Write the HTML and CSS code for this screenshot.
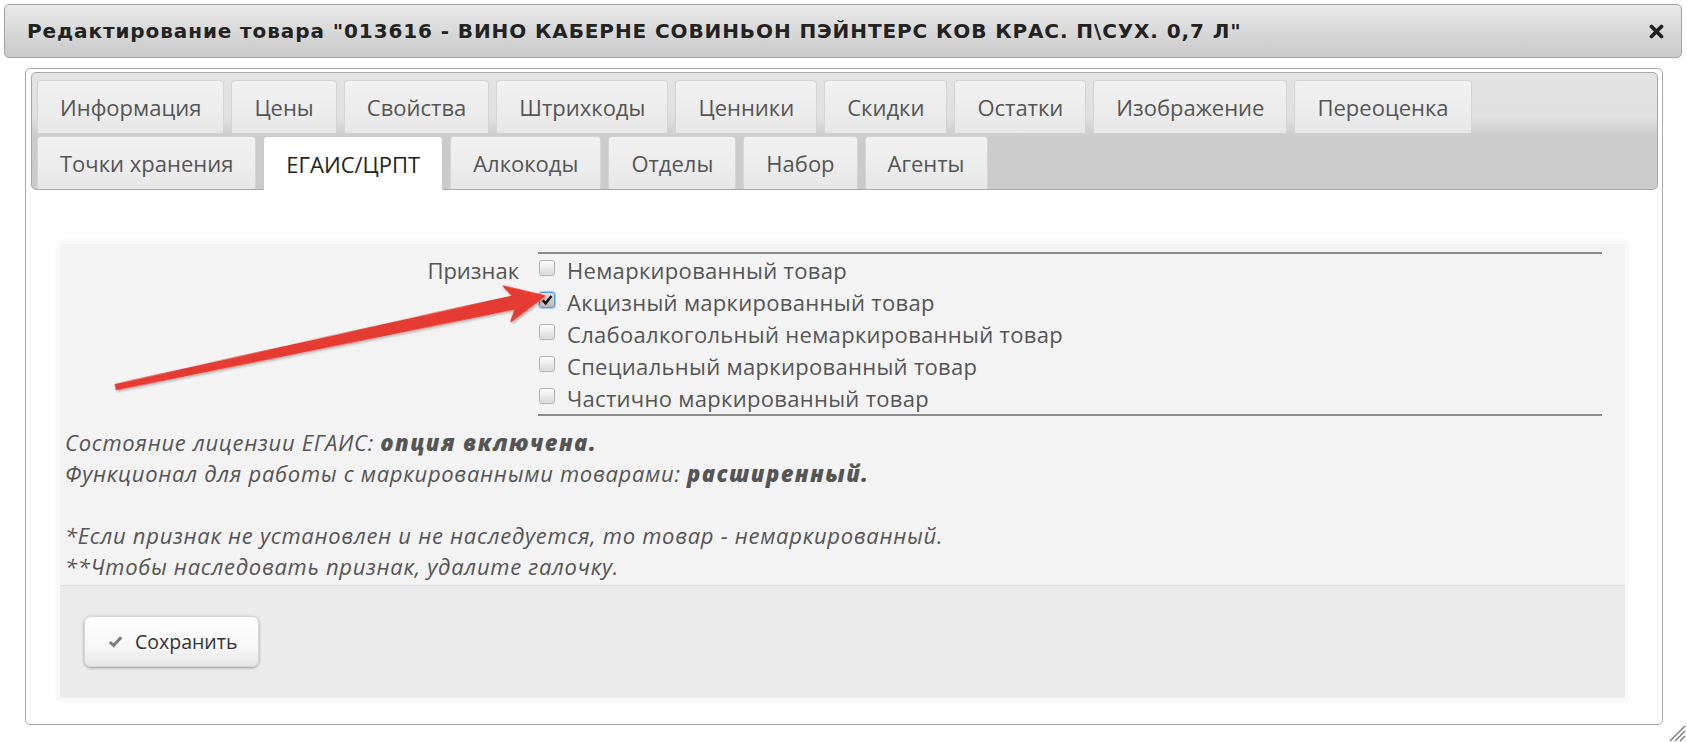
FILE: index.html
```html
<!DOCTYPE html>
<html lang="ru">
<head>
<meta charset="utf-8">
<title>Редактирование товара</title>
<link rel="stylesheet" href="styles.css">
</head>
<body>
<div class="dialog">
  <div class="titlebar">
    <span class="title">Редактирование товара "013616 - ВИНО КАБЕРНЕ СОВИНЬОН ПЭЙНТЕРС КОВ КРАС. П\СУХ. 0,7 Л"</span>
    <svg class="close" width="15" height="15" viewBox="0 0 15 15"><path d="M2.5 2.5 L12.5 12.5 M12.5 2.5 L2.5 12.5" stroke="#222" stroke-width="3.8" stroke-linecap="round"/></svg>
  </div>
  <div class="content">
    <div class="tabs">
      <div class="tab-row">
        <div class="tab">Информация</div>
        <div class="tab">Цены</div>
        <div class="tab">Свойства</div>
        <div class="tab">Штрихкоды</div>
        <div class="tab">Ценники</div>
        <div class="tab">Скидки</div>
        <div class="tab">Остатки</div>
        <div class="tab">Изображение</div>
        <div class="tab">Переоценка</div>
      </div>
      <div class="tab-row">
        <div class="tab">Точки хранения</div>
        <div class="tab active">ЕГАИС/ЦРПТ</div>
        <div class="tab">Алкокоды</div>
        <div class="tab">Отделы</div>
        <div class="tab">Набор</div>
        <div class="tab">Агенты</div>
      </div>
    </div>
    <div class="panel-wrap">
      <div class="panel">
        <div class="panel-body">
          <div class="form-row">
            <div class="form-label">Признак</div>
            <div class="checklist">
              <div class="check-row"><span class="cb"></span><span>Немаркированный товар</span></div>
              <div class="check-row"><span class="cb checked"><svg width="12" height="12" viewBox="0 0 12 12"><path d="M1.8 6.3 L4.7 9.3 L10.4 2" fill="none" stroke="#111" stroke-width="2.5"/></svg></span><span>Акцизный маркированный товар</span></div>
              <div class="check-row"><span class="cb"></span><span>Слабоалкогольный немаркированный товар</span></div>
              <div class="check-row"><span class="cb"></span><span>Специальный маркированный товар</span></div>
              <div class="check-row"><span class="cb"></span><span>Частично маркированный товар</span></div>
            </div>
          </div>
          <div class="notes">
            <div>Состояние лицензии ЕГАИС: <b>опция включена.</b></div>
            <div>Функционал для работы с маркированными товарами: <b>расширенный.</b></div>
            <div class="blank">&nbsp;</div>
            <div>*Если признак не установлен и не наследуется, то товар - немаркированный.</div>
            <div>**Чтобы наследовать признак, удалите галочку.</div>
          </div>
        </div>
        <div class="panel-footer">
          <button class="btn" type="button"><svg width="15" height="13" viewBox="0 0 15 13"><path d="M1.8 7 L5.6 10.4 L13.2 2.2" fill="none" stroke="#7a7a7a" stroke-width="3"/></svg><span>Сохранить</span></button>
        </div>
      </div>
    </div>
  </div>
</div>
<svg class="arrow" width="620" height="420" viewBox="0 0 620 420">
  <defs>
    <filter id="sh" x="-10%" y="-50%" width="120%" height="200%">
      <feDropShadow dx="1" dy="2" stdDeviation="1" flood-color="#000" flood-opacity="0.25"/>
    </filter>
  </defs>
  <g transform="translate(116 387) rotate(-12)" filter="url(#sh)">
    <polygon points="0,-2.5 407,-6.5 400,-18 438,0 400,18 407,6.5 0,2.5" fill="#e53b30" stroke="#e53b30" stroke-width="1.5" stroke-linejoin="round"/>
  </g>
</svg>
<svg class="grip" width="20" height="20" viewBox="0 0 20 20"><path d="M4 19 L19 4 M9 19 L19 9 M14 19 L19 14" stroke="#777" stroke-width="1.4"/></svg>
</body>
</html>
```
FILE: styles.css
```css
html, body {
  margin: 0;
  padding: 0;
  background: #fff;
}
body {
  font-family: "Open Sans", "Liberation Sans", sans-serif;
  position: relative;
  width: 1687px;
  height: 742px;
  overflow: hidden;
}
.dialog {
  margin: 4px 5px 0 4px;
}
.titlebar {
  height: 54px;
  box-sizing: border-box;
  border: 1px solid #a3a3a3;
  border-radius: 5px;
  background: linear-gradient(#e9e9e9, #c9c9c9);
  display: flex;
  align-items: center;
  justify-content: space-between;
  padding: 0 17px 0 22px;
}
.title {
  font-family: "DejaVu Sans", Verdana, sans-serif;
  font-weight: bold;
  font-size: 20px;
  letter-spacing: 0.9px;
  color: #222;
  white-space: nowrap;
}
.close {
  display: block;
}
.content {
  margin: 10px 19px 0 21px;
  height: 657px;
  box-sizing: border-box;
  border: 1px solid #a8a8a8;
  border-radius: 5px;
  padding: 3px 4px 0 5px;
}
.tabs {
  border: 1px solid #a9a9a9;
  border-radius: 5px;
  background: linear-gradient(#e3e3e3 0%, #e0e0e0 38%, #cbcbcb 55%, #cbcbcb 100%);
  padding: 7px 0 0 5px;
  display: flex;
  flex-direction: column;
  gap: 3px;
}
.tab-row {
  display: flex;
  gap: 7px;
}
.tab {
  height: 53px;
  box-sizing: border-box;
  padding: 0 22px;
  border: 1px solid #d4d4d4;
  border-bottom: 0;
  border-radius: 4px 4px 0 0;
  background: linear-gradient(#f1f1f1 0%, #ececec 60%, #e6e6e6 100%);
  display: flex;
  align-items: center;
  font-size: 22px;
  color: #555;
  white-space: nowrap;
}
.tab.active {
  background: #fff;
  color: #222;
  height: 54px;
  margin-bottom: -1px;
  border-color: #c8c8c8;
}
.panel-wrap {
  padding: 54px 33px 0 29px;
}
.panel {
  background: #f3f3f3;
  box-shadow: 0 0 0 3px #f9f9f9, 0 0 5px 3px rgba(0, 0, 0, 0.05);
}
.panel-body {
  padding: 8px 23px 3px 5px;
  color: #555;
  font-size: 22px;
}
.form-row {
  display: grid;
  grid-template-columns: 454px 1fr;
  column-gap: 19px;
}
.form-label {
  text-align: right;
  line-height: 32px;
  padding-top: 2px;
}
.checklist {
  border-top: 2px solid #8a8a8a;
  border-bottom: 2px solid #8a8a8a;
}
.check-row {
  display: flex;
  align-items: center;
  height: 32px;
  white-space: nowrap;
  letter-spacing: 0.3px;
}
.cb {
  width: 16px;
  height: 16px;
  box-sizing: border-box;
  border: 1px solid #b4b4b4;
  border-radius: 3px;
  background: linear-gradient(#fbfbfb, #d9d9d9);
  margin: 0 12px 5px 1px;
  flex: none;
  display: flex;
  align-items: center;
  justify-content: center;
}
.cb.checked {
  border: 1px solid #5b95e8;
  box-shadow: 0 0 0 1px #a9c8f3;
  background: linear-gradient(#e4e4e4, #b9b9b9);
}
.cb svg {
  display: block;
}
.notes {
  margin-top: 11px;
  font-style: italic;
  line-height: 31px;
  letter-spacing: 0.7px;
  color: #555;
}
.notes b {
  font-weight: 800;
  letter-spacing: 1.4px;
}
.panel-footer {
  background: #ebebeb;
  border-top: 1px solid #dddddd;
  height: 113px;
  box-sizing: border-box;
  padding: 30px 0 0 24px;
}
.btn {
  height: 51px;
  display: inline-flex;
  align-items: center;
  gap: 12px;
  padding: 0 21px 0 23px;
  border: 1px solid #d6d6d6;
  border-radius: 7px;
  background: linear-gradient(#ffffff 0%, #f7f7f7 60%, #e6e6e6 100%);
  box-shadow: 0 1px 3px rgba(0, 0, 0, 0.35);
  font-family: "Open Sans", "Liberation Sans", sans-serif;
  font-size: 19.5px;
  color: #333;
}
.arrow {
  position: absolute;
  left: 0;
  top: 0;
  pointer-events: none;
}
.grip {
  position: absolute;
  left: 1666px;
  top: 722px;
}
```
